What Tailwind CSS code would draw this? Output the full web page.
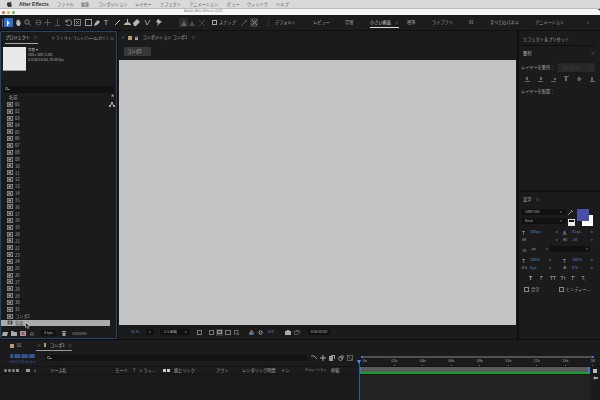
<!DOCTYPE html>
<html lang="ja">
<head>
  <meta charset="UTF-8" />
  <title>Adobe After Effects 2020</title>
  <script src="https://cdn.jsdelivr.net/npm/@tailwindcss/browser@4"></script>
</head>
<body class="w-[600px] h-[400px] overflow-hidden bg-[#0f0f0f] text-[#a8a8a8] font-['Noto_Sans_CJK_JP','Noto_Sans',sans-serif] text-[4.200px] leading-none whitespace-nowrap">

  <!-- menu bar -->
  <div class="h-[9px] bg-[#d9d9d9] border-b border-[#bdbdbd] flex items-center text-[#555]">
    <svg class="ml-[7px] w-[5px] h-[6px] shrink-0" viewBox="0 0 10 12"><path fill="#333" d="M7 0C6 .2 5 1 5 2.500 6.200 2.500 7 1.300 7 0zM5 3.200C4 3.200 3.500 2.700 2.700 2.700 1.200 2.700 0 4 0 6.200 0 9 1.800 12 3 12c.8 0 1.200-.6 2.100-.6s1.200.6 2 .6c1.200 0 2.400-2.200 2.800-3.600-2-.8-2.300-3.800-.2-4.800C9 2.900 8.100 2.600 7.400 2.600 6.400 2.600 5.700 3.200 5 3.200z"/></svg>
    <span class="ml-[7px] w-[38px] font-['Liberation_Sans'] font-bold text-[5px] text-[#333]">After Effects</span>
    <span class="w-[24px]">ファイル</span>
    <span class="w-[17px]">編集</span>
    <span class="w-[37px]">コンポジション</span>
    <span class="w-[25px]">レイヤー</span>
    <span class="w-[29px]">エフェクト</span>
    <span class="w-[38px]">アニメーション</span>
    <span class="w-[20px]">ビュー</span>
    <span class="w-[29px]">ウィンドウ</span>
    <span>ヘルプ</span>
  </div>

  <!-- title bar -->
  <div class="h-[6px] bg-[#f6f6f6] rounded-tr-[3px] flex items-center text-[#888] text-[3.500px]">
    <div class="flex gap-[2px] ml-[2px]">
      <div class="w-[3px] h-[3px] rounded-full bg-[#e8574e]"></div>
      <div class="w-[3px] h-[3px] rounded-full bg-[#e8b23a]"></div>
      <div class="w-[3px] h-[3px] rounded-full bg-[#5cbc4a]"></div>
    </div>
    <span class="ml-[169px] font-['Liberation_Sans']">Adobe After Effects 2020</span>
  </div>

  <!-- toolbar -->
  <div class="h-[15px] bg-[#1c1c1c] flex items-center">
    <div class="ml-[2px] w-px h-[8px] bg-[#666]"></div>
    <div class="ml-[1px] w-[9px] h-[9px] bg-[#2d6fd6] rounded-[1px] flex items-center justify-center">
      <svg class="w-[5px] h-[6px]" viewBox="0 0 5 6"><path fill="#fff" d="M1 0l3 3.500H2.500L2 6 1 5.500z"/></svg>
    </div>
    <svg class="ml-[1.500px] w-[7px] h-[7px]" viewBox="0 0 7 7"><path fill="#b8b8b8" d="M1.500 3.500V1.500h1V3V.5h1V3V1h1v2l1-.500V5L4.500 7h-2L1 4.500z"/></svg>
    <svg class="ml-[2px] w-[7px] h-[7px]" viewBox="0 0 7 7" fill="none" stroke="#999" stroke-width=".8"><circle cx="3" cy="3" r="2.200"/><path d="M4.500 4.500L6.800 6.800"/></svg>
    <svg class="ml-[4px] w-[7px] h-[7px]" viewBox="0 0 7 7" fill="none" stroke="#666" stroke-width=".8"><circle cx="3.500" cy="3.500" r="2.500"/><path d="M1 3.500h5"/></svg>
    <svg class="ml-[2px] w-[7px] h-[7px]" viewBox="0 0 7 7" fill="none" stroke="#666" stroke-width=".8"><path d="M3.500 0v7M0 3.500h7"/></svg>
    <svg class="ml-[3px] w-[7px] h-[7px]" viewBox="0 0 7 7" fill="none" stroke="#666" stroke-width=".8"><path d="M3.500 0v6M1 6.500h5"/></svg>
    <svg class="ml-[4px] w-[7px] h-[7px]" viewBox="0 0 7 7" fill="none" stroke="#aaa" stroke-width=".8"><path d="M1 2.500A3 3 0 1 1 1 5M.5 1l.5 2 2-.5"/></svg>
    <svg class="ml-[2px] w-[7px] h-[7px]" viewBox="0 0 7 7" fill="none" stroke="#999" stroke-width=".8"><rect x=".5" y=".5" width="6" height="6"/><path d="M2 2l3 3M5 2L2 5"/></svg>
    <svg class="ml-[4px] w-[7px] h-[7px]" viewBox="0 0 7 7" fill="none" stroke="#aaa" stroke-width=".9"><rect x=".5" y=".5" width="6" height="6"/></svg>
    <svg class="ml-[2px] w-[7px] h-[7px]" viewBox="0 0 7 7"><path fill="#b4b4b4" d="M0 7l1-3 3-3 2 2-3 3z"/></svg>
    <span class="ml-[2px] w-[7px] text-[8px] text-center font-['Liberation_Sans'] text-[#b4b4b4]">T</span>
    <svg class="ml-[4px] w-[7px] h-[7px]" viewBox="0 0 7 7" fill="none" stroke="#c0c0c0"><path d="M1 6l5-5"/></svg>
    <svg class="ml-[3px] w-[7px] h-[7px]" viewBox="0 0 7 7"><path fill="#b4b4b4" d="M3 0h1v3l3 2v1H0V5l3-2z"/></svg>
    <svg class="ml-[2px] w-[7px] h-[7px]" viewBox="0 0 7 7"><path fill="#b4b4b4" d="M0 4l4-4 3 3-4 4H1z"/></svg>
    <svg class="ml-[4px] w-[7px] h-[7px]" viewBox="0 0 7 7" fill="none" stroke="#b4b4b4" stroke-width=".8"><path d="M1 1l2 5 3-5"/></svg>
    <svg class="ml-[4px] w-[7px] h-[7px]" viewBox="0 0 7 7"><path fill="#b4b4b4" d="M3 0l4 3-2 1-3 3 1-3-2-1z"/></svg>
    <div class="ml-[17.500px] w-[9px] h-[9px] bg-[#2c2c2c] rounded-[1px] flex items-center justify-center">
      <svg class="w-[6px] h-[6px]" viewBox="0 0 6 6"><path fill="#666" d="M3 0l1 3 2 3H0l2-3z"/></svg>
    </div>
    <svg class="ml-[1px] w-[6px] h-[6px]" viewBox="0 0 6 6"><path fill="#4c4c4c" d="M3 0l1 3 2 3H0l2-3z"/></svg>
    <svg class="ml-[4px] w-[6px] h-[6px]" viewBox="0 0 6 6" fill="none" stroke="#4c4c4c" stroke-width=".8"><path d="M0 0l6 6M6 0L0 6"/></svg>
    <div class="ml-[7px] w-[5px] h-[5px] border border-[#aaa]"></div>
    <span class="ml-[2px] w-[17px]">スナップ</span>
    <svg class="ml-[5px] w-[6px] h-[6px]" viewBox="0 0 6 6" fill="none" stroke="#666" stroke-width=".8"><path d="M0 6l6-6M3 0h3v3"/></svg>
    <div class="ml-[3px] w-[8px] h-[9px] bg-[#3a3a3a] rounded-[1px] flex items-center justify-center">
      <svg class="w-[5px] h-[5px]" viewBox="0 0 5 5" fill="none" stroke="#999" stroke-width=".8"><path d="M0 0l5 5M5 0L0 5"/></svg>
    </div>
    <div class="ml-[10px] w-px h-[9px] bg-[#2e2e2e]"></div>
    <span class="ml-[6px] w-[38px]">デフォルト</span>
    <span class="w-[32px]">レビュー</span>
    <span class="w-[25px]">学習</span>
    <div class="w-[29px] h-[10px] border-b border-[#ddd] flex items-center justify-between text-[#d4d4d4]">
      <span>小さい画面</span>
      <span class="text-[#777]">≡</span>
    </div>
    <span class="ml-[8px] w-[25px]">標準</span>
    <span class="w-[37px]">ライブラリ</span>
    <span class="w-[21px]">01</span>
    <span class="w-[45px]">すべてのパネル</span>
    <span class="w-[52px]">アニメーション</span>
    <span>»</span>
  </div>

  <!-- panels -->
  <div class="h-[310px] flex pt-[1px]">

    <!-- project panel -->
    <div class="w-[117px] h-[308px] border border-[#24436f] rounded-[1px] bg-[#1b1b1b] flex flex-col shrink-0">
      <div class="h-[12px] flex items-center pl-[4px] shrink-0">
        <div class="w-[33px] h-full border-b border-[#aaa] flex items-center text-[#ccc] gap-[3px]">
          <span>プロジェクト</span>
          <span class="text-[#777]">≡</span>
        </div>
        <span class="ml-[13px] w-[58px] overflow-hidden">エフェクトコントロール(なし)</span>
        <span class="ml-[1px] text-[#999]">≡</span>
      </div>
      <div class="h-[42px] flex pl-[2px] pt-[3px] gap-[2px] text-[3.500px] shrink-0">
        <div class="w-[23px] h-[24px] bg-[#e9e9e9] border-b border-[#999]"></div>
        <div class="flex flex-col gap-[1.500px] pt-[1px]">
          <span class="text-[#bbb]">背面 ▾</span>
          <span>500 x 500 (1.00)</span>
          <span>Δ 0:00:16:00, 30.00 fps</span>
        </div>
      </div>
      <div class="h-[6.500px] mx-[2px] bg-[#111] flex items-center pl-[2px] shrink-0">
        <svg class="w-[6px] h-[4px]" viewBox="0 0 6 4" fill="none" stroke="#aaa" stroke-width=".7"><circle cx="1.500" cy="1.500" r="1.200"/><path d="M2.500 2.500L5 2.500"/></svg>
      </div>
      <div class="h-[8.500px] flex items-center pl-[8px] pr-[2px] shrink-0 justify-between">
        <span>名前</span>
        <span class="text-[3px]">▲</span>
      </div>
      <div class="flex-1 relative" id="project-list">
        <svg class="absolute right-[1px] top-[1px] w-[6px] h-[5px]" viewBox="0 0 6 5"><path fill="#aaa" d="M2 0h2v2H2zM0 3h2v2H0zM4 3h2v2H4zM2.700 2h.6v.6h1.700V3h-.6v-.1H1.600V3H1v-.4h1.700z"/></svg>
      </div>
      <div class="h-[10px] flex items-center pl-[1px] gap-[3px] shrink-0">
        <svg class="w-[6px] h-[5px]" viewBox="0 0 6 5"><path fill="#aaa" d="M0 5l1-4h5L5 5z"/></svg>
        <svg class="w-[6px] h-[5px]" viewBox="0 0 6 5"><path fill="#aaa" d="M0 0h2l1 1h3v4H0z"/></svg>
        <svg class="w-[6px] h-[5px]" viewBox="0 0 6 5"><rect width="6" height="5" fill="#999"/><rect x="1.500" y="1" width="3" height="3" fill="#b05050"/></svg>
        <svg class="w-[6px] h-[5px]" viewBox="0 0 6 5" fill="none" stroke="#777" stroke-width=".8"><path d="M1 4l2-3 2 3z"/></svg>
        <span class="ml-[3px] w-[15px] h-[6px] rounded-[1px] bg-[#111] text-[3.500px] flex items-center justify-center">8 bpc</span>
        <svg class="ml-[3px] w-[4px] h-[5px]" viewBox="0 0 4 5"><path fill="#999" d="M0 0h4v1H0zM.5 1.500h3V5h-3z"/></svg>
        <div class="ml-[3px] w-[15px] h-[3px] rounded-full bg-[#444]"></div>
      </div>
    </div>

    <!-- composition panel -->
    <div class="ml-[1px] w-[399px] h-[308px] bg-[#1b1b1b] flex flex-col shrink-0">
      <div class="h-[13px] flex items-center pl-[3px] shrink-0">
        <span class="text-[#888]">×</span>
        <div class="ml-[3px] w-[4px] h-[4px] bg-[#b89a70]"></div>
        <svg class="ml-[3px] w-[3px] h-[4px]" viewBox="0 0 3 4"><path fill="#aaa" d="M0 1.500h3V4H0zM.5 1.500V.5h2v1h-.5V1H1v.5z"/></svg>
        <span class="ml-[4px] text-[#bbb]">コンポジション コンポ1</span>
        <span class="ml-[4px] text-[#777]">≡</span>
      </div>
      <div class="h-[16px] pl-[6px] pt-[3px] shrink-0">
        <div class="w-[27px] h-[9px] bg-[#383838] rounded-[1px] flex items-center pl-[3px] text-[#bbb]">コンポ1</div>
      </div>
      <div class="ml-[1px] w-[397px] h-[265px] bg-[#c4c4c4] shrink-0"></div>
      <div class="flex-1 flex items-center text-[3.500px] pl-[13px]">
        <span class="w-[9px] text-[#5b8bd6]">51 %</span>
        <div class="ml-[6px] w-[8px] h-[6px] bg-[#101010] rounded-[1px] flex items-center justify-center text-[3px]">▾</div>
        <div class="ml-[6px] w-[30px] h-[6px] bg-[#101010] rounded-[1px] flex items-center justify-between px-[3px]"><span>フル画質</span><span class="text-[3px]">▾</span></div>
        <div class="ml-[7px] w-[5px] h-[5px] border border-[#777]"></div>
        <div class="ml-[7px] w-[5px] h-[5px] border border-[#777]"></div>
        <div class="ml-[2px] w-[7px] h-[7px] bg-[#3a3a3a] flex items-center justify-center"><div class="w-[5px] h-[4px] border border-[#999]"></div></div>
        <div class="ml-[2px] w-[6px] h-[5px] border border-[#777]"></div>
        <svg class="ml-[3px] w-[5px] h-[5px]" viewBox="0 0 5 5" fill="none" stroke="#888" stroke-width=".7"><rect x=".5" y=".5" width="3.500" height="3.500"/><path d="M3 3l2 2"/></svg>
        <svg class="ml-[10px] w-[5px] h-[5px]" viewBox="0 0 5 5"><circle cx="2.500" cy="1.500" r="1.500" fill="#c04848"/><circle cx="1.500" cy="3.500" r="1.500" fill="#4a9a58"/><circle cx="3.500" cy="3.500" r="1.500" fill="#4d6cc8"/></svg>
        <svg class="ml-[4px] w-[5px] h-[5px]" viewBox="0 0 5 5" fill="none" stroke="#aaa"><circle cx="2.500" cy="2.500" r="1.600"/></svg>
        <span class="ml-[4px] w-[8px] text-[#5b8bd6]">+0.0</span>
        <svg class="ml-[10px] w-[6px] h-[5px]" viewBox="0 0 6 5"><path fill="#aaa" d="M0 1h1.500l.5-1h2l.5 1H6v4H0z"/></svg>
        <svg class="ml-[3px] w-[6px] h-[5px]" viewBox="0 0 6 5" fill="none" stroke="#666" stroke-width=".7"><rect x=".5" y="1.500" width="3.500" height="3"/><path d="M2 1V.5h3.500V3H5"/></svg>
        <span class="ml-[8px] w-[22px] h-[6px] bg-[#111] rounded-[1px] flex items-center justify-center">0:00:00:00</span>
      </div>
    </div>

    <!-- right column -->
    <div class="ml-[2px] flex-1 h-[308px] flex flex-col gap-[2px]">
      <div class="h-[159px] bg-[#1b1b1b] pl-[3px] pr-[8px] flex flex-col shrink-0">
        <div class="h-[15px] border-b border-[#0e0e0e] flex items-center pl-[1px] pt-[2px] shrink-0">エフェクト＆プリセット</div>
        <div class="h-[15px] flex items-center justify-between pl-[1px] text-[#bbb] shrink-0"><span>整列</span><span class="text-[#777]">≡</span></div>
        <div class="flex items-center justify-between h-[9px] mt-[2px] -ml-[1px] shrink-0">
          <span>レイヤーを整列：</span>
          <div class="w-[37px] h-[9px] bg-[#282828] flex items-center justify-between px-[3px] text-[#4e4e4e]"><span>コンポジ...</span><span class="text-[3px]">▾</span></div>
        </div>
        <div class="flex gap-[8px] mt-[4px] pl-[3px] shrink-0">
          <svg class="w-[5px] h-[6px]" viewBox="0 0 5 6"><path fill="#666" d="M0 5h5v1H0zM1 1h2v3H1z"/></svg>
          <svg class="w-[5px] h-[6px]" viewBox="0 0 5 6"><path fill="#666" d="M0 5h5v1H0zM2 1h2v3H2z"/></svg>
          <svg class="w-[5px] h-[6px]" viewBox="0 0 5 6"><path fill="#666" d="M0 5h5v1H0zM3 2h2v2H3z"/></svg>
          <svg class="w-[5px] h-[6px]" viewBox="0 0 5 6"><path fill="#666" d="M0 0h5v1H0zM1 1h2v4H1z"/></svg>
          <svg class="w-[5px] h-[6px]" viewBox="0 0 5 6"><path fill="#666" d="M0 2.500h5v1H0zM1 1h2v4H1z"/></svg>
          <svg class="w-[5px] h-[6px]" viewBox="0 0 5 6"><path fill="#666" d="M0 5h5v1H0zM1 1h2v4H1z"/></svg>
        </div>
        <div class="mt-[7px] -ml-[1px]">レイヤーを配置：</div>
      </div>

      <div class="flex-1 bg-[#1b1b1b] pl-[2px] pt-[5px] flex flex-col">
        <div class="pl-[2px] flex gap-[4px] text-[#bbb] h-[5px] items-center shrink-0"><span>文字</span><span class="text-[#777]">≡</span></div>
        <div class="flex mt-[7px] shrink-0">
          <div class="flex flex-col gap-[3px] w-[45px]">
            <div class="h-[6px] bg-[#101010] flex items-center justify-between px-[4px] text-[3.500px]"><span>URW DIN</span><span class="text-[3px]">▾</span></div>
            <div class="h-[6px] bg-[#101010] flex items-center justify-between px-[4px] text-[3.500px]"><span>Bold</span><span class="text-[3px]">▾</span></div>
          </div>
          <div class="ml-[1px] w-[8px] flex flex-col items-center justify-between">
            <svg class="w-[6px] h-[6px]" viewBox="0 0 6 6" fill="none" stroke="#aaa" stroke-width=".8"><path d="M0 6l4-4M3 1l2 2"/></svg>
            <div class="w-[7px] h-[7px] border border-[#ddd] bg-[linear-gradient(#111_50%,#eee_50%)]"></div>
          </div>
          <div class="relative ml-[2px] w-[16px] h-[17px]">
            <div class="absolute right-0 bottom-0 w-[11px] h-[11px] bg-white"></div>
            <div class="absolute left-0 top-0 w-[12px] h-[12px] bg-[#4a50a8]"></div>
          </div>
        </div>
        <div class="grid grid-cols-[41px_32px] mt-[3px] pl-[1px] gap-y-[2px] text-[3.500px] shrink-0">
          <div class="h-[6px] flex items-center gap-[2px]"><span class="w-[6px] text-[5px] text-[#bbb]">T</span><span class="text-[#5b8bd6] w-[24px]">100 px</span><span class="text-[3px]">▾</span></div>
          <div class="h-[6px] flex items-center gap-[2px]"><span class="w-[7px] text-[5px] text-[#bbb]">A</span><span class="text-[#5b8bd6] w-[17px]">81 px</span><span class="text-[3px]">▾</span></div>
          <div class="h-[6px] flex items-center gap-[2px]"><span class="w-[6px] text-[#bbb]">VA</span><span class="w-[24px]">-</span><span class="text-[3px]">▾</span></div>
          <div class="h-[6px] flex items-center gap-[2px]"><span class="w-[7px] text-[#bbb]">AV</span><span class="text-[#5b8bd6] w-[17px]">-50</span><span class="text-[3px]">▾</span></div>
        </div>
        <div class="flex items-center mt-[3px] pl-[1px] text-[3.500px] h-[6px] shrink-0">
          <span class="w-[8px] text-[5px] text-[#bbb]">≡</span>
          <span class="w-[16px]">- px</span>
          <span class="text-[3px]">▾</span>
          <div class="ml-[2px] w-[40px] h-[6px] bg-[#101010] flex items-center justify-end pr-[2px] text-[3px]">▾</div>
        </div>
        <div class="grid grid-cols-[41px_32px] mt-[5px] pl-[1px] gap-y-[2px] text-[3.500px] shrink-0">
          <div class="h-[6px] flex items-center gap-[2px]"><span class="w-[6px] text-[5px] text-[#bbb]">T</span><span class="text-[#5b8bd6] w-[17px]">100 %</span><span class="text-[3px]">▾</span></div>
          <div class="h-[6px] flex items-center gap-[2px]"><span class="w-[7px] text-[5px] text-[#bbb]">T</span><span class="text-[#5b8bd6] w-[17px]">100 %</span><span class="text-[3px]">▾</span></div>
          <div class="h-[6px] flex items-center gap-[2px]"><span class="w-[6px] text-[#bbb]">A‡</span><span class="text-[#5b8bd6] w-[17px]">0 px</span><span class="text-[3px]">▾</span></div>
          <div class="h-[6px] flex items-center gap-[2px]"><span class="w-[7px] text-[#bbb]">あ</span><span class="text-[#5b8bd6] w-[17px]">0 %</span><span class="text-[3px]">▾</span></div>
        </div>
        <div class="flex mt-[5px] pl-[8px] text-[#bbb] text-[5px] font-['Liberation_Sans'] shrink-0">
          <span class="w-[10.500px] font-bold">T</span>
          <span class="w-[10.500px] italic">T</span>
          <span class="w-[10.500px]">TT</span>
          <span class="w-[10.500px]">Tт</span>
          <span class="w-[10.500px]">T'</span>
          <span>T,</span>
        </div>
        <div class="flex items-center mt-[6px] pl-[3px] shrink-0">
          <div class="w-[5px] h-[5px] border border-[#888]"></div>
          <span class="ml-[2px] w-[28px]">合字</span>
          <div class="w-[5px] h-[5px] border border-[#888]"></div>
          <span class="ml-[2px]">ヒンディー...</span>
        </div>
      </div>
    </div>
  </div>

  <!-- timeline -->
  <div class="h-[60px] bg-[#1b1b1b] flex flex-col relative">
    <div class="h-[11px] flex items-center shrink-0 pl-[10px]">
      <div class="w-[4px] h-[4px] bg-[#b89a70]"></div>
      <span class="ml-[3px] w-[19px]">01</span>
      <div class="w-[36px] h-[11px] border-b border-[#999] flex items-center text-[#ccc]">
        <span class="ml-[1px] text-[#888]">×</span>
        <div class="ml-[3px] w-[4px] h-[4px] bg-[#b89a70]"></div>
        <span class="ml-[4px]">コンポ1</span>
        <span class="ml-[3px] text-[#777]">≡</span>
      </div>
    </div>
    <div class="h-[15px] flex shrink-0">
      <div class="w-[45px] flex flex-col items-center pt-[3px] gap-[2px]">
        <span class="text-[#4d8be8] text-[5px] font-['Liberation_Sans'] font-bold">0:00:00:00</span>
        <span class="text-[#2f5da8] text-[3.300px] font-['Liberation_Sans']">00000 (30.00 fps)</span>
      </div>
      <div class="w-[262px] h-[6px] mt-[4px] bg-[#121212] flex items-center pl-[2px]">
        <svg class="w-[6px] h-[4px]" viewBox="0 0 6 4" fill="none" stroke="#aaa" stroke-width=".7"><circle cx="1.500" cy="1.500" r="1.200"/><path d="M2.500 2.500L5 2.500"/></svg>
      </div>
      <div class="ml-[4px] h-[6px] mt-[4px] flex gap-[3px]">
        <svg class="w-[6px] h-[6px]" viewBox="0 0 6 6" fill="none" stroke="#aaa" stroke-width=".8"><path d="M0 1h3l3 3"/></svg>
        <svg class="w-[6px] h-[6px]" viewBox="0 0 6 6" fill="none" stroke="#aaa"><path d="M3 0v6M0 3h6"/></svg>
        <svg class="w-[6px] h-[6px]" viewBox="0 0 6 6"><path fill="#999" d="M0 1h4v5H0zM2 0h4v4H5V1H2z"/></svg>
        <svg class="w-[6px] h-[6px]" viewBox="0 0 6 6" fill="none" stroke="#999" stroke-width=".8"><circle cx="2.500" cy="3.500" r="2"/><circle cx="4" cy="2" r="1.500"/></svg>
        <svg class="w-[6px] h-[6px]" viewBox="0 0 6 6" fill="none" stroke="#777" stroke-width=".7"><rect x=".5" y=".5" width="5" height="5"/><path d="M1 1l4 4"/></svg>
      </div>
      <!-- time ruler -->
      <div class="ml-[8px] w-[233px] flex flex-col">
        <div class="h-[3px] mt-[5px] bg-[#505050] border-x-2 border-[#3c78d8]"></div>
        <div class="flex justify-between text-[3.800px] mt-[2px] font-['Liberation_Sans'] w-[234px]">
          <div class="flex flex-col items-center gap-[1px] w-[8px]"><span>0s</span></div>
          <div class="flex flex-col items-center gap-[1px]"><span>02s</span><div class="w-px h-[1px] bg-[#777]"></div></div>
          <div class="flex flex-col items-center gap-[1px]"><span>04s</span><div class="w-px h-[1px] bg-[#777]"></div></div>
          <div class="flex flex-col items-center gap-[1px]"><span>06s</span><div class="w-px h-[1px] bg-[#777]"></div></div>
          <div class="flex flex-col items-center gap-[1px]"><span>08s</span><div class="w-px h-[1px] bg-[#777]"></div></div>
          <div class="flex flex-col items-center gap-[1px]"><span>10s</span><div class="w-px h-[1px] bg-[#777]"></div></div>
          <div class="flex flex-col items-center gap-[1px]"><span>12s</span><div class="w-px h-[1px] bg-[#777]"></div></div>
          <div class="flex flex-col items-center gap-[1px]"><span>14s</span><div class="w-px h-[1px] bg-[#777]"></div></div>
          <div class="flex flex-col items-center gap-[1px]"><span>16</span><div class="w-px h-[1px] bg-[#777]"></div></div>
        </div>
      </div>
    </div>
    <div class="h-[9px] flex items-center shrink-0 border-y border-[#141414] relative">
      <div class="w-[50px] flex items-center pl-[4px] gap-[1px] text-[3.500px] shrink-0">
        <span class="w-[3px] h-[3px] rounded-full bg-[#888]"></span>
        <span class="w-[3px] h-[3px] rounded-full bg-[#888]"></span>
        <span class="w-[3px] h-[3px] rounded-full bg-[#888]"></span>
        <span class="w-[3px] h-[3px] bg-[#888]"></span>
        <span class="ml-[6px] w-[4px] h-[3px] bg-[#999]"></span>
        <span class="ml-[3px]">#</span>
      </div>
      <span class="w-[65px]">ソース名</span>
      <span class="w-[18px]">モード</span>
      <span class="w-[6px]">T</span>
      <span class="w-[24px]">トラッ...</span>
      <span class="w-[3px] h-[3px] bg-[#ccc]"></span>
      <span class="ml-[1px] w-[3px] h-[3px] bg-[#ccc]"></span>
      <span class="ml-[4px] w-[42px]">親とリンク</span>
      <span class="w-[26px]">アウト</span>
      <span class="w-[39px]">レンダリング時間</span>
      <span class="w-[24px]">イン</span>
      <span class="w-[26px] text-[3px]">デュレーション</span>
      <span class="w-[28px]">伸縮</span>
      <div class="w-[231px] h-[7px] mb-[1px] bg-[#5a5a5a] border-b-2 border-[#0fa32a] border-x-2 border-x-[#3c78d8] shrink-0"></div>
      <div class="ml-[3px] w-[4px] h-[4px] bg-[#bbb] shrink-0"></div>
    </div>
    <div class="flex-1 flex justify-start pl-[360px]">
      <div class="w-[230px] h-full bg-[repeating-linear-gradient(90deg,#242424_0,#242424_2px,#1f1f1f_2px,#1f1f1f_3px)]"></div>
      <svg class="ml-[3px] w-[5px] h-[4px] mt-[1px]" viewBox="0 0 5 4"><path fill="#999" d="M0 2l2-2v1h3v2H2v1z"/></svg>
    </div>
    <!-- playhead -->
    <div class="absolute left-[359px] top-[21px] bottom-0 w-px bg-[#2e5ea8]"></div>
    <div class="absolute left-[357px] top-[20px] w-0 h-0 border-x-[2.500px] border-x-transparent border-t-[4px] border-t-[#4d8be8]"></div>
  </div>

  <script>
    const rows = [];
    for (let i = 1; i <= 31; i++) rows.push(String(i).padStart(2, "0"));
    rows.push("コンポ1", "背面");

    const list = document.getElementById("project-list");
    const folder = '<svg class="w-[6px] h-[5px] shrink-0" viewBox="0 0 6 5"><rect x=".3" y=".3" width="5.400" height="4.400" fill="#333" stroke="#a8a8a8" stroke-width=".6"/><rect x="1.500" y="1.500" width="2.500" height="2" fill="#999"/></svg>';

    rows.forEach((name) => {
      const selected = name === "背面";
      const row = document.createElement("div");
      row.className = selected
        ? "h-[6.830px] w-[109px] flex items-center pl-[6px] gap-[2px] bg-[#ababab] text-[#444]"
        : "h-[6.830px] flex items-center pl-[6px] gap-[2px]";
      row.innerHTML = folder + "<span>" + name + "</span>";
      list.appendChild(row);
    });
  </script>

  <!-- mouse cursor over the project list -->
  <svg class="absolute left-[25px] top-[322px] w-[5px] h-[7px]" viewBox="0 0 5 7"><path fill="#111" stroke="#eee" stroke-width=".5" d="M.5.500l4 3.700H2.700l.8 2-.8.3-.9-2L.5 5.500z"/></svg>
</body>
</html>
